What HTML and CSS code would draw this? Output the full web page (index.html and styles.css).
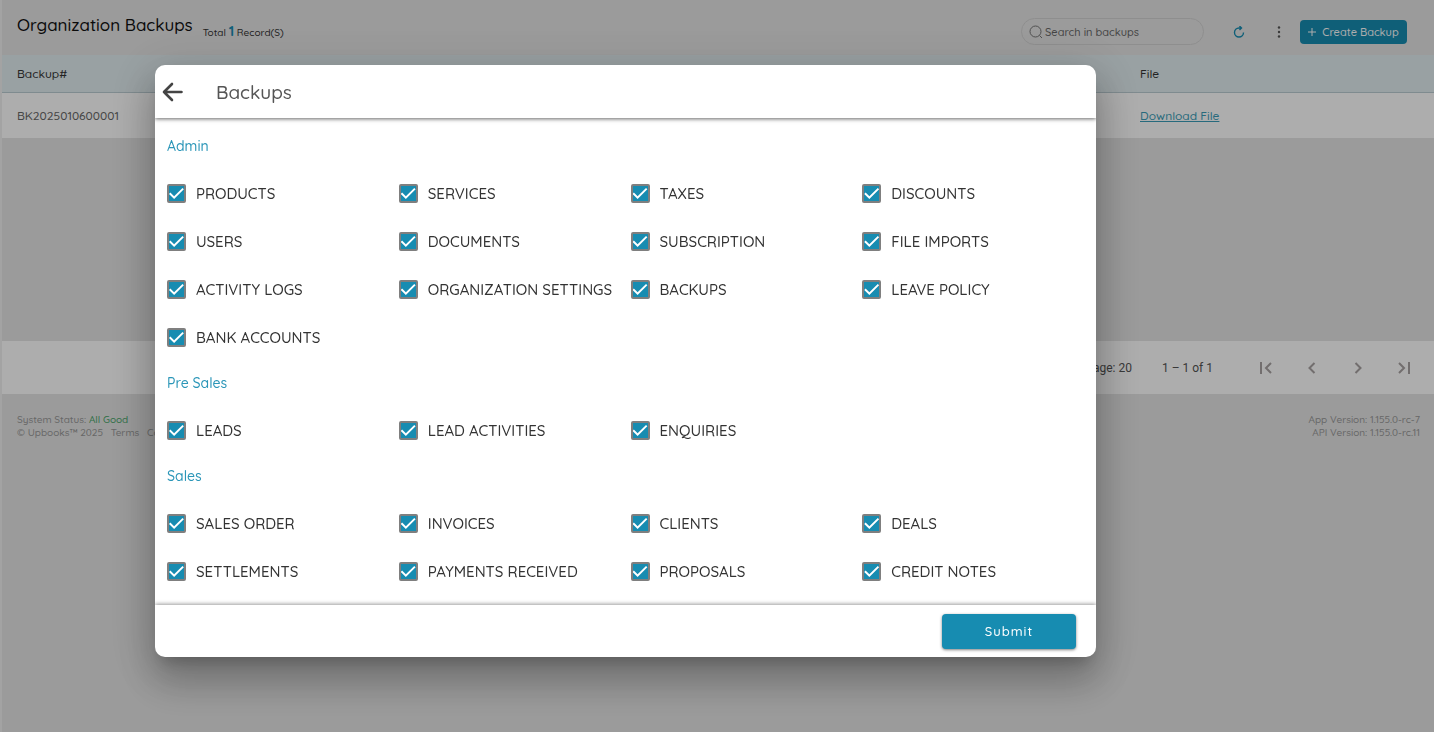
FILE: index.html
```html
<!DOCTYPE html>
<html lang="en">
<head>
    <meta charset="UTF-8">
    <meta name="viewport" content="width=device-width, initial-scale=1.0">
    <title>Organization Backups</title>
    <link rel="stylesheet" href="styles.css">
</head>
<body>
    <div class="page">
        <header class="toolbar">
            <h1>Organization Backups</h1>
            <p class="total">Total <strong>1</strong> Record(S)</p>
            <div class="actions">
                <div class="search">
                    <svg viewBox="0 0 14 14" width="14" height="14"><circle cx="6.5" cy="6.5" r="5.5"/><path d="M10.5 10.5l2.5 2.5"/></svg>
                    <input type="text" placeholder="Search in backups" aria-label="Search in backups">
                </div>
                <button type="button" class="icon-btn refresh" aria-label="Refresh">
                    <svg viewBox="0 0 12 12" width="12" height="12"><path d="M10.5 6.500a4.500 4.500 0 1 1-4.500-4.500h2M6.500 0l2 2-2 2"/></svg>
                </button>
                <button type="button" class="icon-btn more" aria-label="More">
                    <svg viewBox="0 0 4 12" width="4" height="12"><circle cx="2" cy="1.5" r="1.2"/><circle cx="2" cy="6" r="1.2"/><circle cx="2" cy="10.5" r="1.2"/></svg>
                </button>
                <button type="button" class="create-btn">
                    <svg viewBox="0 0 8 8" width="8" height="8"><path d="M4 0v8M0 4h8"/></svg>
                    Create Backup
                </button>
            </div>
        </header>

        <table class="backups">
            <thead>
                <tr><th>Backup#</th><th class="file">File</th></tr>
            </thead>
            <tbody>
                <tr><td>BK2025010600001</td><td class="file"><a href="#">Download File</a></td></tr>
            </tbody>
        </table>

        <div class="paginator">
            <span>Items per page: 20</span>
            <span>1 – 1 of 1</span>
            <div class="pages">
                <button type="button" aria-label="First page"><svg viewBox="0 0 14 14" width="14" height="14"><path d="M2 1v12M12 2L7 7l5 5"/></svg></button>
                <button type="button" aria-label="Previous page"><svg viewBox="0 0 14 14" width="14" height="14"><path d="M9.5 2l-5 5 5 5"/></svg></button>
                <button type="button" aria-label="Next page"><svg viewBox="0 0 14 14" width="14" height="14"><path d="M4.5 2l5 5-5 5"/></svg></button>
                <button type="button" aria-label="Last page"><svg viewBox="0 0 14 14" width="14" height="14"><path d="M12 1v12M2 2l5 5-5 5"/></svg></button>
            </div>
        </div>

        <footer class="site-footer">
            <div>
                <p>System Status: <span class="good">All Good</span></p>
                <p>© Upbooks™ 2025 <a href="#">Terms</a> <a href="#">Contact</a></p>
            </div>
            <div class="versions">
                <p>App Version: 1.155.0-rc-7</p>
                <p>API Version: 1.155.0-rc.11</p>
            </div>
        </footer>
    </div>

    <div class="overlay">
        <form class="modal" role="dialog" aria-labelledby="modal-title">
            <div class="modal-header">
                <button type="button" class="back" aria-label="Back">
                    <svg viewBox="0 0 22 20" width="22" height="20"><path d="M19.500 10H2M10 2l-8 8 8 8"/></svg>
                </button>
                <h2 id="modal-title">Backups</h2>
            </div>

            <div class="modal-body">
                <h3>Admin</h3>
                <div class="options">
                    <label><input type="checkbox" checked>PRODUCTS</label>
                    <label><input type="checkbox" checked>SERVICES</label>
                    <label><input type="checkbox" checked>TAXES</label>
                    <label><input type="checkbox" checked>DISCOUNTS</label>
                    <label><input type="checkbox" checked>USERS</label>
                    <label><input type="checkbox" checked>DOCUMENTS</label>
                    <label><input type="checkbox" checked>SUBSCRIPTION</label>
                    <label><input type="checkbox" checked>FILE IMPORTS</label>
                    <label><input type="checkbox" checked>ACTIVITY LOGS</label>
                    <label><input type="checkbox" checked>ORGANIZATION SETTINGS</label>
                    <label><input type="checkbox" checked>BACKUPS</label>
                    <label><input type="checkbox" checked>LEAVE POLICY</label>
                    <label><input type="checkbox" checked>BANK ACCOUNTS</label>
                </div>

                <h3>Pre Sales</h3>
                <div class="options">
                    <label><input type="checkbox" checked>LEADS</label>
                    <label><input type="checkbox" checked>LEAD ACTIVITIES</label>
                    <label><input type="checkbox" checked>ENQUIRIES</label>
                </div>

                <h3>Sales</h3>
                <div class="options">
                    <label><input type="checkbox" checked>SALES ORDER</label>
                    <label><input type="checkbox" checked>INVOICES</label>
                    <label><input type="checkbox" checked>CLIENTS</label>
                    <label><input type="checkbox" checked>DEALS</label>
                    <label><input type="checkbox" checked>SETTLEMENTS</label>
                    <label><input type="checkbox" checked>PAYMENTS RECEIVED</label>
                    <label><input type="checkbox" checked>PROPOSALS</label>
                    <label><input type="checkbox" checked>CREDIT NOTES</label>
                </div>
            </div>

            <div class="modal-footer">
                <button type="submit" class="submit">Submit</button>
            </div>
        </form>
    </div>
</body>
</html>
```
FILE: styles.css
```css
* {
    box-sizing: border-box;
}

body {
    margin: 0;
    min-height: 100vh;
    font-family: Quicksand, Lato, sans-serif;
    font-weight: 500;
    color: #333;
    background-color: #e5e5e5;
}

h1, h2, h3, p {
    margin: 0;
    font-weight: 500;
}

button {
    padding: 0;
    border: none;
    background: none;
    font-family: inherit;
    font-weight: 500;
    cursor: pointer;
}

svg {
    display: block;
    fill: none;
    stroke: currentColor;
    stroke-width: 1;
}

.page {
    min-height: 100vh;
    border-left: 2px solid #f0f0f0;
}

.toolbar {
    display: flex;
    align-items: center;
    height: 55px;
    padding: 0 27px 0 15px;
}

.toolbar h1 {
    padding-bottom: 6px;
    font-size: 17px;
    line-height: 24px;
    color: #111;
}

.total {
    margin-left: 10px;
    padding-top: 8px;
    font-size: 10px;
    line-height: 16px;
}

.total strong {
    font-size: 14px;
    color: #178cb1;
}

.actions {
    display: flex;
    align-items: center;
    margin-left: auto;
    padding-top: 8px;
}

.search {
    display: flex;
    align-items: center;
    gap: 2px;
    width: 183px;
    height: 27px;
    padding: 0 7px;
    border: 1px solid #d2d2d2;
    border-radius: 14px;
    color: #777;
}

.search input {
    flex: 1;
    min-width: 0;
    padding: 0;
    border: none;
    outline: none;
    background: none;
    font-family: inherit;
    font-size: 11px;
    font-weight: 500;
}

.search input::placeholder {
    color: #666;
}

.icon-btn {
    display: flex;
    justify-content: center;
    width: 40px;
}

.refresh {
    margin-left: 15px;
    color: #178cb1;
}

.refresh svg {
    stroke-width: 1.4;
}

.more {
    color: #555;
}

.more svg {
    fill: currentColor;
    stroke: none;
}

.create-btn {
    display: flex;
    align-items: center;
    justify-content: center;
    gap: 6px;
    width: 107px;
    height: 24px;
    margin-left: 1px;
    border-radius: 4px;
    background-color: #178cb1;
    color: #fff;
    font-size: 11px;
}

.backups {
    width: 100%;
    border-spacing: 0;
    font-size: 12px;
    text-align: left;
}

.backups th {
    height: 38px;
    padding: 0 15px;
    border-bottom: 1px solid #bccdd3;
    background-color: #e2edf0;
    font-weight: 500;
}

.backups td {
    height: 45px;
    padding: 0 15px;
    background-color: #fff;
    color: #666;
}

.backups .file {
    width: 309px;
}

.backups a {
    color: #3a9db8;
}

.paginator {
    display: flex;
    align-items: center;
    justify-content: flex-end;
    gap: 30px;
    height: 53px;
    margin-top: 203px;
    padding-right: 7px;
    background-color: #fff;
    font-family: Roboto, sans-serif;
    font-size: 12px;
    font-weight: 400;
    color: #555;
}

.pages {
    display: flex;
}

.pages button {
    display: flex;
    justify-content: center;
    width: 46px;
    color: #a8a2a2;
}

.pages svg {
    stroke-width: 2;
}

.site-footer {
    display: flex;
    justify-content: space-between;
    padding: 19px 14px 0 15px;
    font-size: 10px;
    line-height: 13px;
    color: #999;
}

.site-footer a {
    margin-left: 5px;
    color: inherit;
    text-decoration: none;
}

.good {
    color: #4aa56a;
}

.versions {
    text-align: right;
}

.overlay {
    position: fixed;
    inset: 0;
    padding: 65px 338px 20px 155px;
    background-color: rgba(0, 0, 0, 0.32);
    overflow: auto;
}

.modal {
    border-radius: 10px;
    background-color: #fff;
    box-shadow: 0 11px 15px -7px rgba(0, 0, 0, 0.2),
        0 24px 38px 3px rgba(0, 0, 0, 0.2),
        0 9px 46px 8px rgba(0, 0, 0, 0.14);
    overflow: hidden;
}

.modal-header {
    display: flex;
    align-items: center;
    gap: 32px;
    height: 53px;
    padding-left: 7px;
    box-shadow: 0 1px 4px rgba(0, 0, 0, 0.6);
}

.modal-header h2 {
    font-size: 19px;
    line-height: 28px;
    color: #555;
}

.back {
    color: #444;
}

.back svg {
    stroke-width: 2.6;
    stroke-linecap: round;
    stroke-linejoin: round;
}

.modal-body {
    padding: 18px 2px 20px 12px;
}

.modal-body h3 {
    margin-bottom: 23px;
    font-size: 14px;
    line-height: 20px;
    color: #2b96b8;
}

.options {
    display: grid;
    grid-template-columns: repeat(4, 1fr);
    row-gap: 20px;
}

.options + h3 {
    margin-top: 22px;
}

.options label {
    display: flex;
    align-items: center;
    gap: 10px;
    height: 28px;
    font-size: 15px;
    white-space: nowrap;
}

.options input {
    appearance: none;
    width: 19px;
    height: 19px;
    margin: 0;
    border: 2px solid #7f7f7f;
    border-radius: 2px;
}

.options input:checked {
    background-color: #178cb1;
}

.options input:checked::before {
    content: "";
    display: block;
    height: 15px;
    background-color: #fff;
    clip-path: polygon(0 56%, 9% 47%, 34% 72%, 90% 16%, 99% 25%, 34% 90%);
}

.modal-footer {
    display: flex;
    align-items: center;
    justify-content: flex-end;
    height: 52px;
    padding-right: 20px;
    box-shadow: 0 -1px 4px rgba(0, 0, 0, 0.4);
}

.submit {
    width: 134px;
    height: 35px;
    border-radius: 4px;
    background-color: #178cb1;
    box-shadow: 0 1px 3px rgba(0, 0, 0, 0.5);
    color: #fff;
    font-size: 13px;
    letter-spacing: 1px;
}
```
